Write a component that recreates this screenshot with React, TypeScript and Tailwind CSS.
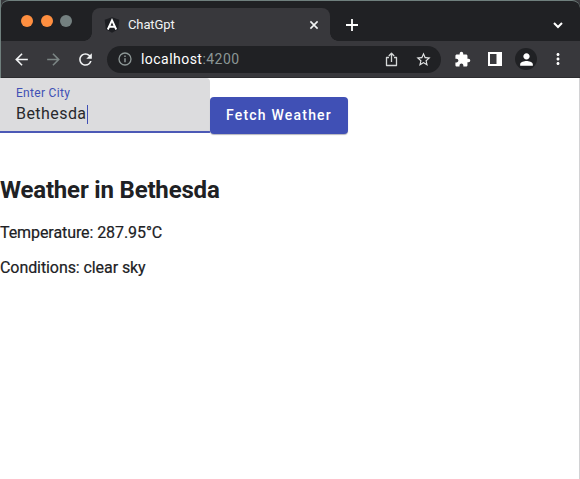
import React from "react";
import {
  MdArrowBack,
  MdArrowForward,
  MdRefresh,
  MdExtension,
  MdPerson,
  MdMoreVert,
  MdStarBorder,
} from "react-icons/md";

function AngularLogo() {
  return (
    <svg className="h-4 w-4 shrink-0" viewBox="0 0 16 16">
      <path d="M8 0.3 15.3 2.8 14.2 12.3 8 15.8 1.8 12.3 0.7 2.8Z" fill="#1d1e22" />
      <path d="M3.8 12.5 8 3.2 12.2 12.5M5.5 9.8H10.5" fill="none" stroke="#fff" strokeWidth="1.9" />
    </svg>
  );
}

function TabStrip() {
  return (
    <div className="flex h-[41px] items-end rounded-t-lg border-t border-[#6f7f7d] bg-[#202124]">
      <div className="flex h-10 w-[91px] shrink-0 items-center gap-[7.5px] pl-5">
        <span className="h-3 w-3 rounded-full bg-[#ff8f40]" />
        <span className="h-3 w-3 rounded-full bg-[#ff8f40]" />
        <span className="h-3 w-3 rounded-full bg-[#748080]" />
      </div>
      <div className="relative flex h-[33px] w-[238px] shrink-0 items-center rounded-t-lg bg-[#38383c] pl-3 pr-2.5">
        <span className="absolute bottom-0 -left-2 h-2 w-2 bg-[radial-gradient(circle_at_0_0,#202124_7.5px,#38383c_8px)]" />
        <span className="absolute bottom-0 -right-2 h-2 w-2 bg-[radial-gradient(circle_at_100%_0,#202124_7.5px,#38383c_8px)]" />
        <AngularLogo />
        <span className="ml-2 text-[13px] leading-4 tracking-[-0.12px] text-[#f1f3f4]">ChatGpt</span>
        <svg className="ml-auto h-3 w-3" viewBox="0 0 12 12" fill="none" stroke="#f1f3f4" strokeWidth="1.6">
          <path d="M2.4 2.4 9.6 9.6M9.6 2.4 2.4 9.6" />
        </svg>
      </div>
      <div className="flex h-[33px] grow items-center pl-[15px] pr-4">
        <svg className="h-3.5 w-3.5" viewBox="0 0 14 14" fill="none" stroke="#fff" strokeWidth="1.8">
          <path d="M7 1V13M1 7H13" />
        </svg>
        <svg className="ml-auto h-3 w-3" viewBox="0 0 12 12" fill="none" stroke="#fff" strokeWidth="2">
          <path d="M2 4 6 8 10 4" />
        </svg>
      </div>
    </div>
  );
}

function Toolbar() {
  return (
    <div className="flex h-[37px] items-center border-b border-[#2c2c2f] bg-[#38383c] text-[#f1f3f4]">
      <MdArrowBack className="ml-[11px] h-[19px] w-[19px] shrink-0" />
      <MdArrowForward className="ml-[13px] h-[19px] w-[19px] shrink-0 text-[#7b8584]" />
      <MdRefresh className="ml-[13px] h-[19px] w-[19px] shrink-0" />
      <div className="ml-3 flex h-[27px] w-[334px] shrink-0 items-center rounded-full bg-[#202124] pl-[11px] pr-[9px]">
        <svg className="h-3.5 w-3.5" viewBox="0 0 14 14" fill="none" stroke="#8d9796">
          <circle cx="7" cy="7" r="6" strokeWidth="1.3" />
          <path d="M7 6.2V10.3M7 3.5V5" strokeWidth="1.5" />
        </svg>
        <span className="ml-[9px] text-[14px] leading-5 tracking-[0.46px] text-white">
          localhost<span className="text-[#8b9695]">:4200</span>
        </span>
        <svg className="ml-auto h-[15px] w-[13px]" viewBox="0 0 13 15" fill="none" stroke="#d5d8d8" strokeWidth="1.3">
          <path d="M4 5.5H1.5V13.5H11.5V5.5H9M6.5 10V1.5M3.8 4 6.5 1.3 9.2 4" strokeLinejoin="round" />
        </svg>
        <MdStarBorder className="ml-[17px] h-[17px] w-[17px] shrink-0 text-[#e4e6e6]" />
      </div>
      <MdExtension className="ml-[13px] h-[17px] w-[17px] shrink-0 text-white" />
      <svg className="ml-[17px] h-3.5 w-3.5 shrink-0" viewBox="0 0 14 14">
        <path d="M0 0H14V14H0ZM2 2V12H8.5V2Z" fill="#fff" fillRule="evenodd" />
      </svg>
      <span className="ml-[13px] flex h-[22px] w-[22px] shrink-0 items-center justify-center rounded-full bg-[#202124]">
        <MdPerson className="h-[19px] w-[19px] text-white" />
      </span>
      <MdMoreVert className="ml-3 h-[18px] w-[18px] shrink-0 text-white" />
    </div>
  );
}

export default function App() {
  return (
    <div className="h-[479px] w-[580px] overflow-hidden bg-white font-['Roboto',sans-serif] text-[#202124]">
      <div className="border-l border-[#6f7f7d] bg-[#38383c]">
        <TabStrip />
        <Toolbar />
      </div>
      <main className="h-[401px] border-r border-[#d2d2d4]">
        <div className="flex items-start">
          <label className="block h-[55px] w-[210px] rounded-tr border-b-2 border-[#4c59b6] bg-[#dcdcde] pl-4 pt-2">
            <span className="block text-[12px] leading-[14px] tracking-[0.3px] text-[#4050b5]">Enter City</span>
            <span className="mt-1 flex items-center text-[16px] leading-5 tracking-[0.44px] text-[#28292c]">
              Bethesda
              <span className="h-[19px] border-l border-[#4050b5]" />
            </span>
          </label>
          <button className="mt-[19px] h-[37px] w-[138px] rounded bg-[#4050b5] text-[14px] font-medium tracking-[1.2px] text-white shadow-[0_1px_1px_#b5b5bd]">
            Fetch Weather
          </button>
        </div>
        <h2 className="mt-[42px] text-[24px] font-bold leading-7 tracking-[-0.18px]">Weather in Bethesda</h2>
        <p className="mt-[19px] text-[16px] leading-[19px] tracking-[-0.08px] [-webkit-text-stroke:0.2px]">Temperature: 287.95°C</p>
        <p className="mt-4 text-[16px] leading-[19px] tracking-[-0.08px] [-webkit-text-stroke:0.2px]">Conditions: clear sky</p>
      </main>
    </div>
  );
}
